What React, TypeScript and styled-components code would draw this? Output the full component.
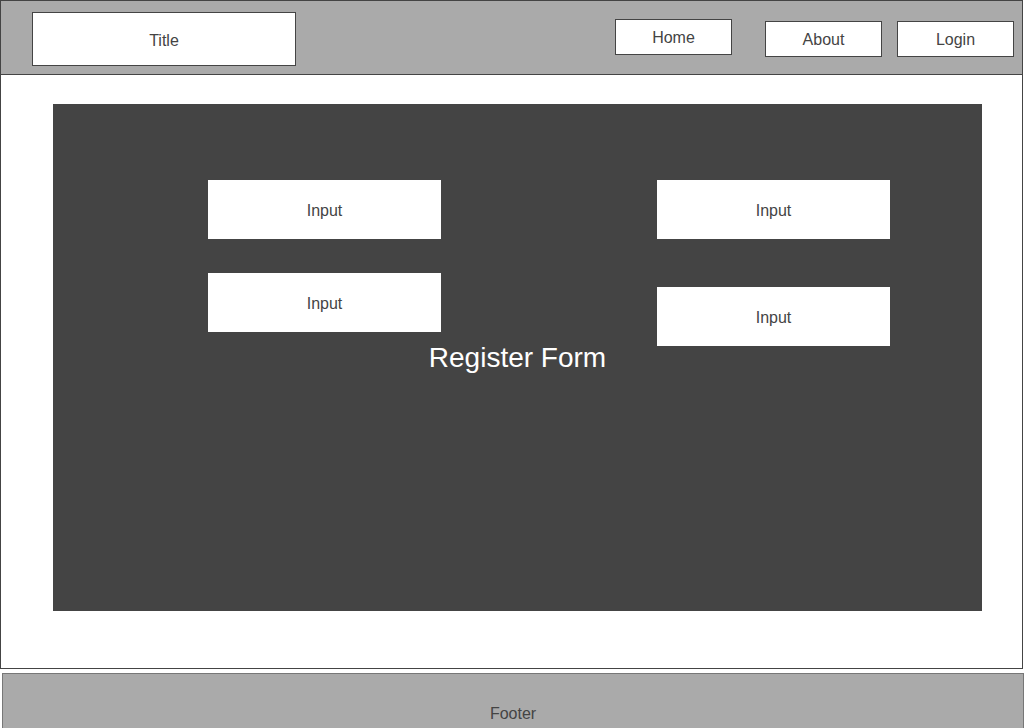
import React, { FC } from "react";
import styled, { createGlobalStyle } from "styled-components";

const GlobalStyle = createGlobalStyle`
  html, body {
    margin: 0;
    padding: 0;
    background: #ffffff;
    overflow: hidden;
  }
  body {
    font-family: "Liberation Sans", Arial, sans-serif;
    color: #444444;
  }
`;

const navItems = [
  { label: "Home", top: 18, gap: 0 },
  { label: "About", top: 20, gap: 33 },
  { label: "Login", top: 20, gap: 15 },
];

const App: FC = () => {
  return (
    <>
      <GlobalStyle />
      <Page>
        <Header>
          <TitleBox>Title</TitleBox>
          <Nav>
            {navItems.map((item) => (
              <NavButton key={item.label} $top={item.top} $gap={item.gap}>
                {item.label}
              </NavButton>
            ))}
          </Nav>
        </Header>
        <Main>
          <Panel>
            <Columns>
              <Column $gap={34}>
                <InputBox>Input</InputBox>
                <InputBox>Input</InputBox>
              </Column>
              <Column $gap={48}>
                <InputBox>Input</InputBox>
                <InputBox>Input</InputBox>
              </Column>
            </Columns>
            <FormTitle>Register Form</FormTitle>
          </Panel>
        </Main>
        <Footer>Footer</Footer>
      </Page>
    </>
  );
};

export default App;

const Page = styled.div`
  width: 1024px;
  display: flex;
  flex-direction: column;
`;

const Header = styled.header`
  box-sizing: border-box;
  width: 1023px;
  height: 75px;
  display: flex;
  align-items: flex-start;
  padding-left: 31px;
  background: #aaaaaa;
  border: 1px solid #444444;
`;

const TitleBox = styled.div`
  box-sizing: border-box;
  width: 264px;
  height: 54px;
  margin-top: 11px;
  display: flex;
  align-items: center;
  justify-content: center;
  padding-top: 4px;
  background: #ffffff;
  border: 1px solid #444444;
  font-size: 16px;
`;

const Nav = styled.nav`
  display: flex;
  align-items: flex-start;
  margin-left: auto;
  margin-right: 8px;
`;

const NavButton = styled.div<{ $top: number; $gap: number }>`
  box-sizing: border-box;
  width: 117px;
  height: 36px;
  margin-top: ${({ $top }) => `${$top}px`};
  margin-left: ${({ $gap }) => `${$gap}px`};
  display: flex;
  align-items: center;
  justify-content: center;
  padding-top: 2px;
  background: #ffffff;
  border: 1px solid #444444;
  font-size: 16px;
`;

const Main = styled.main`
  box-sizing: border-box;
  width: 1023px;
  height: 594px;
  padding: 29px 0 0 52px;
  border: 1px solid #444444;
  border-top: none;
`;

const Panel = styled.section`
  width: 929px;
  height: 507px;
  padding-top: 76px;
  box-sizing: border-box;
  display: flex;
  flex-direction: column;
  background: #444444;
`;

const Columns = styled.div`
  display: flex;
  align-items: flex-start;
  gap: 216px;
  padding-left: 155px;
`;

const Column = styled.div<{ $gap: number }>`
  display: flex;
  flex-direction: column;
  gap: ${({ $gap }) => `${$gap}px`};
`;

const InputBox = styled.div`
  width: 233px;
  height: 59px;
  display: flex;
  align-items: center;
  justify-content: center;
  padding-top: 2px;
  box-sizing: border-box;
  background: #ffffff;
  font-size: 16px;
  color: #444444;
`;

const FormTitle = styled.h2`
  margin: -4px 0 0;
  text-align: center;
  font-size: 28px;
  font-weight: normal;
  color: #ffffff;
`;

const Footer = styled.footer`
  box-sizing: border-box;
  width: 1022px;
  height: 80px;
  margin: 4px 0 0 2px;
  padding-top: 31px;
  text-align: center;
  background: #aaaaaa;
  border: 1px solid #777777;
  font-size: 16px;
  color: #444444;
`;
